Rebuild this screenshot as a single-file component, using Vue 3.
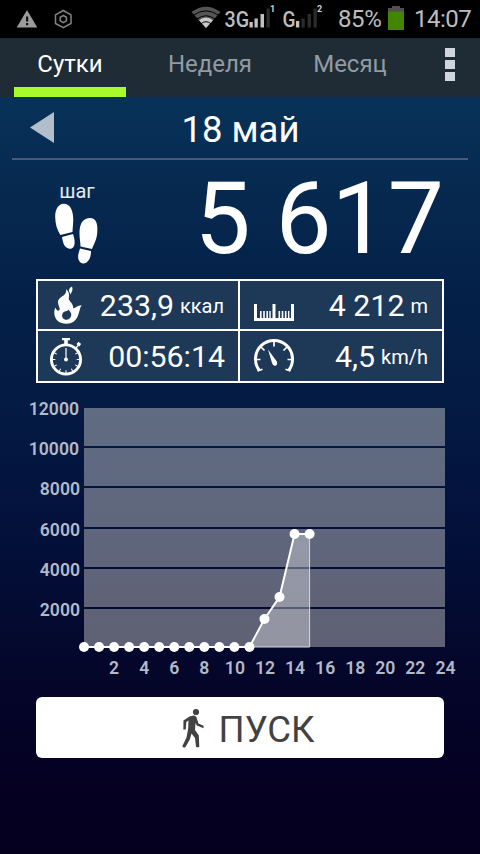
<script setup>
const tabs = ['Сутки', 'Неделя', 'Месяц']
const metrics = [
  { icon: 'flame', value: '233,9', unit: 'ккал' },
  { icon: 'ruler', value: '4 212', unit: 'm' },
  { icon: 'watch', value: '00:56:14', unit: '' },
  { icon: 'gauge', value: '4,5', unit: 'km/h' }
]
const bands = [
  { y: 13, h: 38 }, { y: 53, h: 38 }, { y: 93, h: 39 },
  { y: 134, h: 38 }, { y: 174, h: 38 }, { y: 214, h: 38 }
]
const yLabels = [
  [12000, 20], [10000, 60], [8000, 100], [6000, 141], [4000, 181], [2000, 221]
]
const hourX = (h) => 84 + h * 15.04
const xLabels = [2, 4, 6, 8, 10, 12, 14, 16, 18, 20, 22, 24]
const heights = [252, 252, 252, 252, 252, 252, 252, 252, 252, 252, 252, 252, 224, 202, 139, 139]
const points = heights.map((y, i) => ({ x: hourX(i), y }))
const line = points.map((p) => `${p.x},${p.y}`).join(' ')
const area = points.slice(11).map((p) => `${p.x},${p.y}`).join(' ') + ` ${hourX(15)},252`
const ticks = [60, 90, 120, 150, 180, 210, 240, 270, 300]
</script>

<template>
  <div class="screen">
    <header class="status">
      <svg class="alerts" width="80" height="38" viewBox="0 0 80 38">
        <path d="M27 10 37.3 27.6H16.7Z" fill="#9c9c9c" />
        <path d="M26 16.5h2.2v5H26zM26 23h2.2v2.3H26z" fill="#111" />
        <path d="M63.3 10.5 71 14.8v8.7l-7.7 4.2-7.8-4.2v-8.7Z" fill="none" stroke="#858585" stroke-width="1.5" stroke-linejoin="round" />
        <path d="m63.3 15.5 3.1 1.8v3.6l-3.1 1.8-3.1-1.8v-3.6Z" fill="none" stroke="#858585" stroke-width="1.5" />
      </svg>
      <svg class="signals" width="144" height="38" viewBox="190 0 144 38">
        <path d="M206 28 191.5 12Q206 1.500 220.500 12Z" fill="#555" />
        <path d="M206 28 199 20.300Q206 14.500 213 20.300Z" fill="#c8c8c8" />
        <path d="M193.500 15.200Q206 6.500 218.500 15.200M197 19Q206 12.500 215 19M201.200 23.600Q206 19.800 210.800 23.600" fill="none" stroke="#000" stroke-width="1" />
        <text x="224.500" y="27.300" class="net" textLength="24.500" lengthAdjust="spacingAndGlyphs">3G</text>
        <path d="M249.500 22h3.300v5.500h-3.300zM254.500 18.500h3.300v9h-3.300zM260.500 14h3.500v13.500h-3.500z" fill="#c0c0c0" />
        <path d="M266.500 8.500h3.300v19h-3.300z" fill="#2b2b2b" />
        <text x="270" y="11.800" class="sim">1</text>
        <text x="282.500" y="27.300" class="net" textLength="13" lengthAdjust="spacingAndGlyphs">G</text>
        <path d="M296 21h3.300v6.500H296z" fill="#c0c0c0" />
        <path d="M301.500 18.500h3.300v9h-3.300zM307.500 14h3.500v13.500h-3.500zM313.500 8.500h3.300v19h-3.300z" fill="#2b2b2b" />
        <text x="317" y="12" class="sim">2</text>
      </svg>
      <span class="percent">85%</span>
      <svg class="battery" width="16" height="24" viewBox="0 0 16 24">
        <path d="M4 0h8v2h4v5H0V2h4Z" fill="#505050" />
        <path d="M0 5.500h16V24H0Z" fill="#418500" />
      </svg>
      <span class="clock">14:07</span>
    </header>

    <nav class="tabs">
      <div v-for="(t, i) in tabs" :key="t" class="tab" :class="{ active: i === 0 }">{{ t }}</div>
      <div class="more"><i></i><i></i><i></i></div>
    </nav>

    <section class="date">
      <svg class="back" width="24" height="31" viewBox="0 0 24 31"><path d="M24 0v31L0 15.500Z" fill="#b2becb" /></svg>
      <span class="day">18 май</span>
    </section>

    <section class="steps">
      <div class="caption">
        <span>шаг</span>
        <svg width="44" height="61" viewBox="0 0 44 61" fill="#fff">
          <path d="M7 1C3 2 0 7 .2 14 .3 21 2 27 5.400 32L17.500 29C17.500 25 18.400 22 18.200 15 18 7 14.500-.500 7 1Z" />
          <path d="M7 34 18 31C19 34 20 37 19.500 41 19 45 16.500 46.500 13.500 45.500 9 44 8 40 7 34Z" />
          <path d="M35 15C41 15 43 21 42.300 29 42 36 39 41 37 46L25.500 43.500C25.500 39 24.300 35 24.500 28 25 20 28.500 15 35 15Z" />
          <path d="M25 45.500 36 48C36 53 35 57 31.500 59.500 28.500 61.500 25 60.500 23.500 56.500 22.300 53 24 49 25 45.500Z" />
        </svg>
      </div>
      <div class="count">5 617</div>
    </section>

    <section class="metrics">
      <div v-for="m in metrics" :key="m.icon" class="metric" :class="m.icon">
        <svg v-if="m.icon === 'flame'" class="icon" width="44" height="48" viewBox="0 0 44 48">
          <path d="M20 8C23.500 11 23.500 14 22.800 17 22.500 20.500 27 21.500 27.300 27 29 28 30.500 24.500 35.700 24.300 33.500 27 34 30 32 34.500 30 40 26 42.700 20.500 42.700 13.500 42.700 8.500 39 8.300 32 8.200 29 8.800 28 9.500 26.500 10.500 29.500 12 30 13 29.500 15 28 12 25 12 21 12 17 17 15.500 19 13 20.500 11 20.300 9.500 20 8ZM22.500 28.500C21.500 31 18 29.500 16.600 32.500 15 36 17.500 38.800 20.500 38.800 24.500 38.800 26.500 34 24.500 31.300Z" fill="#fff" fill-rule="evenodd" />
          <path d="M26 5.500C22.500 7.500 22 10 25 13.500 25 11 27.500 10 26 5.500Z" fill="#fff" />
        </svg>
        <svg v-else-if="m.icon === 'ruler'" class="icon" width="48" height="48" viewBox="0 0 48 48" fill="#fff">
          <path d="M14 23h3v14h34V23h3v17H14Z" />
          <path d="M32.500 23h3v14h-3zM20 30h1.600v7H20zM23.200 30h1.600v7h-1.600zM26.400 30H28v7h-1.600zM29.300 30h1.400v7h-1.400zM38.500 30h1.600v7h-1.600zM41.700 30h1.600v7h-1.600zM44.900 30h1.600v7h-1.600zM48 30h1.400v7H48z" />
        </svg>
        <svg v-else-if="m.icon === 'watch'" class="icon" width="44" height="50" viewBox="0 0 44 50">
          <circle cx="20" cy="28.500" r="14.600" fill="none" stroke="#fff" stroke-width="2.900" />
          <path d="M16 7h8v2.200h-2.200V13h-3.600V9.200H16ZM30.500 13l2-2.200 2.700 2.300-2 2.300Z" fill="#fff" />
          <path d="M20 17v11.500M30 17l2.500-3" stroke="#fff" stroke-width="1.200" />
          <circle cx="20" cy="28.500" r="2" fill="#fff" />
          <path v-for="a in ticks" :key="a" d="M20 15v2.800" :transform="`rotate(${a} 20 28.500)`" stroke="#fff" stroke-width="1" />
        </svg>
        <svg v-else class="icon" width="48" height="50" viewBox="0 0 48 50">
          <path d="M19.500 39.500A18.500 18.500 0 1 1 48.500 39.500" fill="none" stroke="#fff" stroke-width="3" />
          <path d="m17.500 40 5-1.800M50.500 40l-5-1.800M15 28.500h5.500M53 28.500h-5.500M34 10v5.500M21 16l3.500 3.500M47 16l-3.500 3.500" fill="none" stroke="#fff" stroke-width="1.700" />
          <path d="M28 18.500 36.800 30.500Q38 34 35.300 34.700 33 35.200 32 32Z" fill="#fff" />
        </svg>
        <span class="value">{{ m.value }}<span v-if="m.unit" class="unit">{{ m.unit }}</span></span>
      </div>
    </section>

    <svg class="chart" width="480" height="290" viewBox="0 0 480 290">
      <rect v-for="b in bands" :key="b.y" x="84" :y="b.y" width="361" :height="b.h" class="band" />
      <text v-for="l in yLabels" :key="l[0]" :x="l[0] >= 10000 ? 79 : 80" :y="l[1]" text-anchor="end" class="label">{{ l[0] }}</text>
      <text v-for="h in xLabels" :key="h" :x="hourX(h) + (h >= 10 ? 0.5 : 0)" y="279" text-anchor="middle" class="label">{{ h }}</text>
      <polygon :points="area" fill="#fff" fill-opacity=".33" />
      <path :d="`M${hourX(11)} 252H${hourX(15)}V139`" fill="none" stroke="#d5d7dd" stroke-width="1" />
      <polyline :points="line" fill="none" stroke="#fff" stroke-width="2" />
      <circle v-for="p in points" :key="p.x" :cx="p.x" :cy="p.y" r="5" fill="#fff" />
    </svg>

    <button class="start">
      <svg width="24" height="40" viewBox="0 0 24 40">
        <circle cx="15" cy="4" r="3.100" fill="#424242" />
        <path d="M8.500 8.500 12.500 7.500Q15.500 7.800 16 11L17.500 15.500 22.500 17.800V20.300L15.800 17.600 14.500 15 14 22 17.800 27.500 18.300 38.700Q16.500 40 15 38.700L14 30 10.500 25.500 8.800 31.500 4.500 39Q2.500 40.500 1.300 38.300L5.500 29.500 7.200 20.500 7.500 12.500 5.300 14 4.800 21.500H2.300L2.500 12.500Z" fill="#424242" />
      </svg>
      <span>ПУСК</span>
    </button>
  </div>
</template>

<style>
body {
  margin: 0;
  background: #05001e;
}
</style>

<style scoped>
.screen {
  width: 480px;
  height: 854px;
  overflow: hidden;
  display: flex;
  flex-direction: column;
  font-family: Roboto, 'Liberation Sans', sans-serif;
  color: #fff;
  background: linear-gradient(#083259 97px, #06284f 200px, #042048 300px, #041b43 400px, #03103a 540px, #04072b 660px, #050022 790px, #05001e 854px);
}
.status {
  height: 38px;
  flex: none;
  display: flex;
  background: #000;
  color: #bdbdbd;
  font-size: 24px;
  line-height: 39px;
}
.signals {
  margin-left: 110px;
}
.net {
  font-size: 21.5px;
  font-weight: 500;
  fill: #bdbdbd;
}
.sim {
  font-size: 9px;
  font-weight: 700;
  fill: #d0d0d0;
}
.percent {
  width: 51px;
  margin-left: 4px;
  letter-spacing: -0.4px;
}
.battery {
  margin: 6px 10px 0 -1px;
}
.clock {
  letter-spacing: -0.5px;
}
.tabs {
  height: 59px;
  flex: none;
  display: flex;
  background: #1f2c36;
}
.tab {
  width: 112px;
  margin: 0 14px;
  height: 49px;
  border-bottom: 10px solid transparent;
  text-align: center;
  font-size: 24px;
  line-height: 52px;
  color: #929ba2;
}
.tab.active {
  color: #fff;
  border-color: #a9fa2d;
}
.more {
  margin: 10px 0 0 25px;
  display: flex;
  flex-direction: column;
  gap: 3px;
}
.more i {
  width: 10px;
  height: 9px;
  background: #cfd5da;
}
.date {
  height: 61px;
  flex: none;
  margin: 0 12px;
  border-bottom: 2px solid #485c77;
  display: flex;
}
.back {
  margin: 15px 0 0 18px;
}
.day {
  flex: 1;
  margin-right: 41px;
  text-align: center;
  font-size: 36.5px;
  line-height: 65px;
}
.steps {
  height: 119px;
  flex: none;
  display: flex;
  justify-content: space-between;
  padding: 0 36px 0 55px;
}
.caption {
  display: flex;
  flex-direction: column;
  align-items: center;
  font-size: 20px;
  line-height: 24px;
  padding-top: 19px;
  color: #e6ebf1;
}
.count {
  font-size: 100px;
  line-height: 118px;
}
.metrics {
  flex: none;
  margin: 0 36px;
  height: 104px;
  box-sizing: border-box;
  display: grid;
  grid-template-columns: 200px 202px;
  grid-template-rows: 48px 50px;
  gap: 2px;
  padding: 2px;
  background: linear-gradient(#fff, #fff) 0 0 / 100% 2px no-repeat, linear-gradient(#fff, #fff) 0 50px / 100% 2px no-repeat, linear-gradient(#fff, #fff) 0 100% / 100% 2px no-repeat, linear-gradient(#fff, #fff) 0 0 / 2px 100% no-repeat, linear-gradient(#fff, #fff) 202px 0 / 2px 100% no-repeat, linear-gradient(#fff, #fff) 100% 0 / 2px 100% no-repeat;
}
.metric {
  display: flex;
  justify-content: space-between;
  background: #1e3858;
  padding: 0 14px 0 8px;
}
.icon {
  overflow: visible;
  flex: none;
}
.ruler .icon,
.gauge .icon {
  margin-left: -8px;
}
.value {
  font-size: 30.3px;
  line-height: 49px;
  white-space: nowrap;
}
.watch .value {
  margin-right: -1px;
  line-height: 51px;
}
.gauge .value {
  line-height: 51px;
}
.unit {
  font-size: 20px;
  line-height: 20px;
  vertical-align: 3px;
  margin-left: 6px;
}
.chart {
  flex: none;
  display: block;
  margin-top: 12px;
}
.band {
  fill: rgba(255, 250, 240, 0.37);
}
.label {
  font-size: 17.6px;
  font-weight: 600;
  fill: #b2b9c9;
}
.start {
  flex: none;
  margin: 12px 36px 0;
  height: 61px;
  padding: 0 0 0 15px;
  border: 0;
  border-radius: 6px;
  background: #fff;
  color: #424242;
  font: 36.5px Roboto, 'Liberation Sans', sans-serif;
  display: flex;
  align-items: center;
  justify-content: center;
  gap: 14px;
}
.start span {
  line-height: 61px;
  margin-top: 3px;
}
</style>
